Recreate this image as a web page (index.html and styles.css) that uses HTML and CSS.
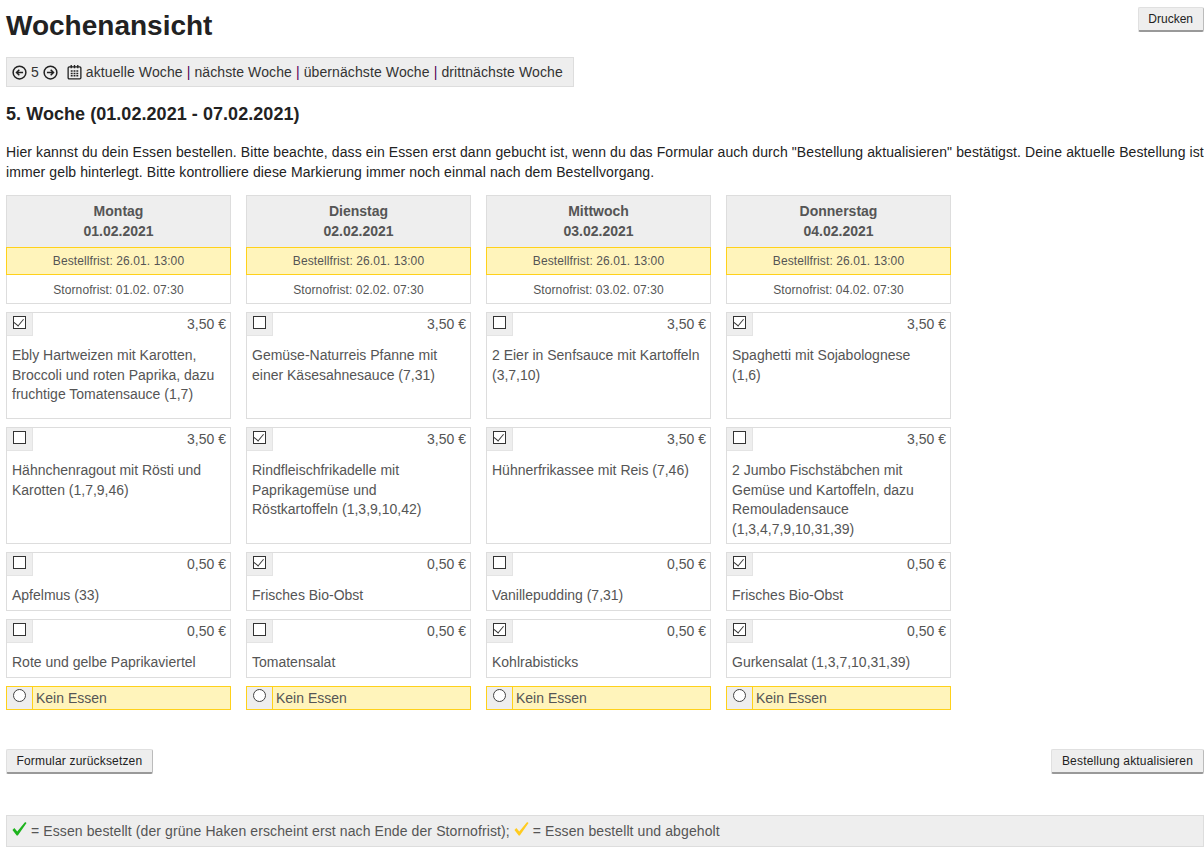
FILE: index.html
```html
<!DOCTYPE html>
<html lang="de">
  <head>
    <meta charset="UTF-8" />
    <title>Wochenansicht</title>
    <link rel="stylesheet" href="styles.css">
  </head>
  <body>
    <div class="top-row">
      <h1>Wochenansicht</h1>
      <button class="btn print-btn">Drucken</button>
    </div>

    <!-- Wochennavigation -->
    <div class="week-nav">
      <svg class="nav-icon" viewBox="0 0 16 16"><circle cx="8" cy="8" r="6.8"/><path d="M11.8 8H5M7.8 5 4.8 8l3 3"/></svg>
      <span class="week-no">5</span>
      <svg class="nav-icon" viewBox="0 0 16 16"><circle cx="8" cy="8" r="6.8"/><path d="M4.2 8H11M8.2 5l3 3-3 3"/></svg>
      <svg class="cal-icon" viewBox="0 0 16 16"><rect x="1.2" y="2.5" width="13.6" height="12.8" rx="1.2"/><path d="M4.5 0.5v3.5M8 0.5v3.5M11.5 0.5v3.5"/><path class="dots" d="M4 7h2M7 7h2M10 7h2M4 9.5h2M7 9.5h2M10 9.5h2M4 12h2M7 12h2M10 12h2"/></svg>
      <span class="nav-links">aktuelle Woche <i>|</i> nächste Woche <i>|</i> übernächste Woche <i>|</i> drittnächste Woche</span>
    </div>

    <h2>5. Woche (01.02.2021 - 07.02.2021)</h2>

    <p class="intro">Hier kannst du dein Essen bestellen. Bitte beachte, dass ein Essen erst dann gebucht ist, wenn du das Formular auch durch "Bestellung aktualisieren" bestätigst. Deine aktuelle Bestellung ist immer gelb hinterlegt. Bitte kontrolliere diese Markierung immer noch einmal nach dem Bestellvorgang.</p>

    <div class="week-grid" id="weekGrid"></div>

    <div class="form-buttons">
      <button class="btn">Formular zurücksetzen</button>
      <button class="btn">Bestellung aktualisieren</button>
    </div>

    <!-- Legende -->
    <div class="legend">
      <svg class="tick tick-green" viewBox="0 0 16 16"><path d="M0.5 8.5 2.5 6.5 5.6 10 14 0 15.5 1 6.2 14.5 5 14.5Z"/></svg>
      = Essen bestellt (der grüne Haken erscheint erst nach Ende der Stornofrist);
      <svg class="tick tick-yellow" viewBox="0 0 16 16"><path d="M0.5 8.5 2.5 6.5 5.6 10 14 0 15.5 1 6.2 14.5 5 14.5Z"/></svg>
      = Essen bestellt und abgeholt
    </div>

    <script src="app.js"></script>
  </body>
</html>
```

FILE: app.js
```js
// Speiseplan der Woche
const days = [
  { name: "Montag", date: "01.02.2021", storno: "01.02. 07:30" },
  { name: "Dienstag", date: "02.02.2021", storno: "02.02. 07:30" },
  { name: "Mittwoch", date: "03.02.2021", storno: "03.02. 07:30" },
  { name: "Donnerstag", date: "04.02.2021", storno: "04.02. 07:30" },
];

const rows = [
  {
    price: "3,50 €",
    size: "main",
    items: [
      ["Ebly Hartweizen mit Karotten, Broccoli und roten Paprika, dazu fruchtige Tomatensauce (1,7)", true],
      ["Gemüse-Naturreis Pfanne mit einer Käsesahnesauce (7,31)", false],
      ["2 Eier in Senfsauce mit Kartoffeln (3,7,10)", false],
      ["Spaghetti mit Sojabolognese (1,6)", true],
    ],
  },
  {
    price: "3,50 €",
    size: "main",
    items: [
      ["Hähnchenragout mit Rösti und Karotten (1,7,9,46)", false],
      ["Rindfleischfrikadelle mit Paprikagemüse und Röstkartoffeln (1,3,9,10,42)", true],
      ["Hühnerfrikassee mit Reis (7,46)", true],
      ["2 Jumbo Fischstäbchen mit Gemüse und Kartoffeln, dazu Remouladensauce (1,3,4,7,9,10,31,39)", false],
    ],
  },
  {
    price: "0,50 €",
    size: "side",
    items: [
      ["Apfelmus (33)", false],
      ["Frisches Bio-Obst", true],
      ["Vanillepudding (7,31)", false],
      ["Frisches Bio-Obst", true],
    ],
  },
  {
    price: "0,50 €",
    size: "side",
    items: [
      ["Rote und gelbe Paprikaviertel", false],
      ["Tomatensalat", false],
      ["Kohlrabisticks", true],
      ["Gurkensalat (1,3,7,10,31,39)", true],
    ],
  },
];

const grid = document.getElementById("weekGrid");

days.forEach((day) => {
  const head = document.createElement("div");
  head.className = "day-head";
  head.innerHTML = `
    <div class="day-title">${day.name}<br>${day.date}</div>
    <div class="deadline order">Bestellfrist: 26.01. 13:00</div>
    <div class="deadline cancel">Stornofrist: ${day.storno}</div>`;
  grid.appendChild(head);
});

rows.forEach((row) => {
  row.items.forEach(([text, checked]) => {
    const card = document.createElement("div");
    card.className = `meal ${row.size}`;
    card.innerHTML = `
      <div class="meal-top">
        <span class="check-cell"><input type="checkbox" ${checked ? "checked" : ""}></span>
        <span class="price">${row.price}</span>
      </div>
      <div class="meal-text">${text}</div>`;
    grid.appendChild(card);
  });
});

days.forEach(() => {
  const none = document.createElement("div");
  none.className = "no-meal";
  none.innerHTML = `<span class="radio-cell"><input type="radio"></span><span class="no-meal-text">Kein Essen</span>`;
  grid.appendChild(none);
});
```

FILE: styles.css
```css
body {
  margin: 0;
  padding: 7px 0 0 6px;
  font-family: "Liberation Sans", Arial, sans-serif;
  font-size: 14px;
  color: #222;
  background: #fff;
}
.top-row {
  display: flex;
  justify-content: space-between;
  align-items: flex-start;
  height: 50px;
}
h1 {
  margin: 0;
  font-size: 28px;
  line-height: 37px;
  color: #222;
}
.btn {
  height: 25px;
  padding: 0 10px;
  font-family: inherit;
  font-size: 12px;
  color: #222;
  background: #eee;
  border: 1px solid #e0e0e0;
  border-bottom: 2px solid #999;
  border-right: 1px solid #bbb;
  border-radius: 2px;
}
.print-btn {
  padding: 0 10px 0 9px;
}
.form-buttons .btn {
  padding: 0 10px 0 9.5px;
  letter-spacing: 0.18px;
}
.week-nav {
  display: flex;
  align-items: center;
  box-sizing: border-box;
  width: 568px;
  height: 30px;
  padding-left: 5px;
  background: #eee;
  border: 1px solid #ddd;
  color: #333;
}
.nav-icon {
  width: 15px;
  height: 15px;
  fill: none;
  stroke: #222;
  stroke-width: 1.6;
}
.week-no {
  margin: 0 4px;
}
.cal-icon {
  width: 15px;
  height: 16px;
  margin: 0 4px 0 9px;
  fill: none;
  stroke: #222;
  stroke-width: 1.4;
}
.cal-icon .dots {
  stroke-width: 1.6;
}
.nav-links {
  letter-spacing: 0.1px;
}
.nav-links i {
  font-style: normal;
  color: #505;
}
h2 {
  margin: 17px 0 0;
  font-size: 18px;
  line-height: 20px;
  letter-spacing: 0.05px;
  color: #222;
}
.intro {
  margin: 18px 0 0;
  width: 1198px;
  font-size: 14px;
  line-height: 20px;
  letter-spacing: 0.1px;
}
.week-grid {
  display: grid;
  grid-template-columns: repeat(4, 225px);
  column-gap: 15px;
  row-gap: 8px;
  margin-top: 13px;
  color: #555;
}
.day-head {
  display: flex;
  flex-direction: column;
  text-align: center;
}
.day-title {
  height: 52px;
  box-sizing: border-box;
  padding-top: 5px;
  font-weight: bold;
  line-height: 20px;
  background: #eee;
  border: 1px solid #ddd;
  border-bottom: 0;
}
.deadline {
  height: 29px;
  box-sizing: border-box;
  font-size: 12px;
  letter-spacing: 0.1px;
  color: #555;
}
.order {
  height: 28px;
  line-height: 26px;
  background: #fff4bb;
  border: 1px solid #ffd11a;
}
.cancel {
  line-height: 30px;
  border: 1px solid #ddd;
  border-top: 0;
}
.meal {
  box-sizing: border-box;
  border: 1px solid #ddd;
  min-width: 0;
}
.meal.main {
  min-height: 107px;
}
.meal.side {
  min-height: 59px;
}
.meal-top {
  display: flex;
  justify-content: space-between;
  height: 23px;
}
.check-cell {
  display: flex;
  justify-content: center;
  align-items: flex-start;
  width: 26px;
  height: 23px;
  padding-top: 3px;
  box-sizing: border-box;
  background: #eee;
  border-right: 1px solid #e4e4e4;
  border-bottom: 1px solid #e4e4e4;
}
/* Checkbox und Radio wie im Browser des Originals */
.check-cell input,
.radio-cell input {
  appearance: none;
  position: relative;
  margin: 0;
  width: 13px;
  height: 13px;
  background: #fff;
  border: 1px solid #333;
}
.radio-cell input {
  border-color: #444;
  border-radius: 50%;
}
.check-cell input:checked::after {
  content: "";
  position: absolute;
  left: 1px;
  top: -1px;
  width: 6px;
  height: 9px;
  box-sizing: border-box;
  border-right: 1px solid #333;
  border-bottom: 1px solid #333;
  transform: rotate(40deg) translate(1px, 0);
}
.price {
  padding: 2px 4px 0 0;
  line-height: 18px;
}
.meal-text {
  padding: 10px 8px 3px 5px;
  line-height: 19.7px;
}
.no-meal {
  display: flex;
  height: 24px;
  box-sizing: border-box;
  background: #fff4bb;
  border: 1px solid #ffd11a;
}
.radio-cell {
  display: flex;
  justify-content: center;
  width: 26px;
  padding-top: 2px;
  box-sizing: border-box;
  background: #eee;
  border-right: 1px solid #ffd11a;
}
.no-meal-text {
  padding-left: 3px;
  line-height: 22px;
}
.form-buttons {
  display: flex;
  justify-content: space-between;
  margin-top: 39px;
}
.legend {
  height: 32px;
  box-sizing: border-box;
  margin-top: 41px;
  padding-left: 5px;
  line-height: 30px;
  background: #eee;
  border: 1px solid #ddd;
  color: #555;
  letter-spacing: 0.1px;
}
.tick {
  width: 15px;
  height: 15px;
  vertical-align: -1px;
}
.tick-green {
  fill: #1db31d;
}
.tick-yellow {
  fill: #ffcb1f;
}
```
